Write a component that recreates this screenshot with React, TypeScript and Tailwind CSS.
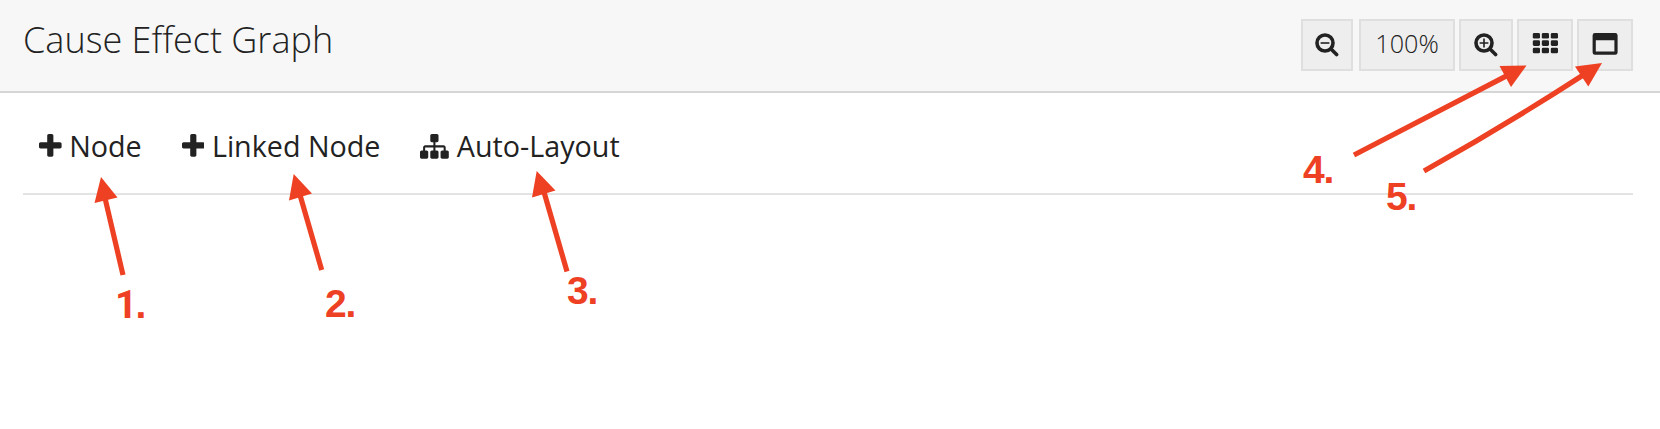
import type { ReactNode } from "react";

const PLUS =
  "M1600 736v192q0 40-28 68t-68 28h-416v416q0 40-28 68t-68 28h-192q-40 0-68-28t-28-68v-416h-416q-40 0-68-28t-28-68v-192q0-40 28-68t68-28h416v-416q0-40 28-68t68-28h192q40 0 68 28t28 68v416h416q40 0 68 28t28 68z";
const SITEMAP =
  "M1792 1248v320q0 40-28 68t-68 28h-320q-40 0-68-28t-28-68v-320q0-40 28-68t68-28h96v-192h-512v192h96q40 0 68 28t28 68v320q0 40-28 68t-68 28h-320q-40 0-68-28t-28-68v-320q0-40 28-68t68-28h96v-192h-512v192h96q40 0 68 28t28 68v320q0 40-28 68t-68 28h-320q-40 0-68-28t-28-68v-320q0-40 28-68t68-28h96v-192q0-52 38-90t90-38h512v-192h-96q-40 0-68-28t-28-68v-320q0-40 28-68t68-28h320q40 0 68 28t28 68v320q0 40-28 68t-68 28h-96v192h512q52 0 90 38t38 90v192h96q40 0 68 28t28 68z";

function PlusIcon() {
  return (
    <svg className="h-[28.8px] w-[22.6px] shrink-0" viewBox="192 0 1408 1792" fill="currentColor">
      <path d={PLUS} />
    </svg>
  );
}

function SitemapIcon() {
  return (
    <svg className="h-[28.8px] w-[28.8px] shrink-0" viewBox="0 0 1792 1792" fill="currentColor">
      <path d={SITEMAP} />
    </svg>
  );
}

function ZoomIcon({ plus = false }: { plus?: boolean }) {
  return (
    <svg className="h-6 w-6 shrink-0" viewBox="0 0 24 24" fill="none" stroke="currentColor">
      <circle cx="10" cy="10" r="8" strokeWidth="3.6" />
      <path d="M16 16l5.6 5.6" strokeWidth="3.6" strokeLinecap="round" />
      <path d={plus ? "M5.6 10h8.8M10 5.6v8.8" : "M5.6 10h8.8"} strokeWidth="1.6" />
    </svg>
  );
}

function GridIcon() {
  return (
    <svg className="h-[21px] w-[26px] shrink-0" viewBox="0 0 26 21" fill="currentColor">
      {[0, 7.3, 14.7].map((y) =>
        [0.8, 9.8, 18.8].map((x) => (
          <rect key={`${x}-${y}`} x={x} y={y} width="7.2" height="5.6" rx="1.4" />
        )),
      )}
    </svg>
  );
}

function WindowIcon() {
  return (
    <svg className="h-[22px] w-[26px] shrink-0" viewBox="0 0 26 22" fill="currentColor">
      <path
        fillRule="evenodd"
        d="M3 0h20.2a2.4 2.4 0 0 1 2.4 2.4v17a2.4 2.4 0 0 1-2.4 2.4H3a2.4 2.4 0 0 1-2.4-2.4v-17A2.4 2.4 0 0 1 3 0zM3.8 7.2v11.2h18.6V7.2z"
      />
    </svg>
  );
}

function HeaderButton({ className, children }: { className: string; children: ReactNode }) {
  return (
    <button className={`flex h-[52px] shrink-0 border-2 border-[#dfdfdf] bg-[#eeeeee] ${className}`}>
      {children}
    </button>
  );
}

function ToolButton({ icon, label }: { icon: ReactNode; label: string }) {
  return (
    <button className="flex h-10 items-center gap-[7.6px] whitespace-nowrap">
      {icon}
      <span className="text-[28.7px] leading-10">{label}</span>
    </button>
  );
}

const ARROWS = [
  { line: "M123 275L105 198", head: "101,177 94.5,203 117.5,197.5" },
  { line: "M321.7 270L300 195", head: "293.7,174 289,200.5 312,193.5" },
  { line: "M567 271.5L544 192", head: "536.7,171 532,197.5 555.5,190.5" },
  { line: "M1354 155L1507 75.6", head: "1526.5,65.5 1499.5,66 1511,87" },
  { line: "M1424 171Q1506 125 1584 74.5", head: "1602,63 1575,66.5 1588.3,86.5" },
];

function Marker({ className, children }: { className: string; children: ReactNode }) {
  return (
    <span
      className={`absolute font-['Liberation_Sans',Arial,sans-serif] text-[39px] leading-[38px] font-bold tracking-[-1.2px] text-[#ee4023] ${className}`}
    >
      {children}
    </span>
  );
}

export default function App() {
  return (
    <div className="relative h-[429px] w-[1660px] overflow-hidden bg-white font-['Open_Sans',sans-serif] text-[#222222]">
      <header className="flex h-[93px] items-start justify-between border-b-2 border-[#d6d6d6] bg-[#f7f7f7] pt-[19px] pr-[27px] pl-[23px]">
        <h1 className="-mt-[3px] text-[36px] leading-[48px] font-light whitespace-nowrap">Cause Effect Graph</h1>
        <div className="flex">
          <HeaderButton className="mr-[6px] w-[52px] pt-[12px] pl-[12.4px]">
            <ZoomIcon />
          </HeaderButton>
          <HeaderButton className="mr-1 w-24 justify-center pt-1">
            <span className="text-[25.2px] leading-9 font-light">100%</span>
          </HeaderButton>
          <HeaderButton className="mr-1 w-[54px] pt-[12px] pl-[13.4px]">
            <ZoomIcon plus />
          </HeaderButton>
          <HeaderButton className="mr-1 w-14 pt-[12px] pl-[13px]">
            <GridIcon />
          </HeaderButton>
          <HeaderButton className="w-14 pt-[12px] pl-[13.3px]">
            <WindowIcon />
          </HeaderButton>
        </div>
      </header>

      <nav className="mr-[27px] ml-[23px] flex h-[102px] items-start gap-[40px] border-b-2 border-[#e3e3e3] pt-[33px] pl-[16px]">
        <ToolButton icon={<PlusIcon />} label="Node" />
        <ToolButton icon={<PlusIcon />} label="Linked Node" />
        <ToolButton icon={<SitemapIcon />} label="Auto-Layout" />
      </nav>

      <svg className="absolute inset-0 h-full w-full" viewBox="0 0 1660 429" fill="none">
        {ARROWS.map((a) => (
          <g key={a.head}>
            <path d={a.line} stroke="#ee4023" strokeWidth="5.2" />
            <polygon points={a.head} fill="#ee4023" />
          </g>
        ))}
      </svg>
      <Marker className="top-[286px] left-[115px]">
        <span className="font-[Roboto,sans-serif] tracking-[-2px]">1</span>.
      </Marker>
      <Marker className="top-[285px] left-[325px]">2.</Marker>
      <Marker className="top-[272px] left-[567px]">3.</Marker>
      <Marker className="top-[151px] left-[1303px]">4.</Marker>
      <Marker className="top-[178px] left-[1386px]">5.</Marker>
    </div>
  );
}
